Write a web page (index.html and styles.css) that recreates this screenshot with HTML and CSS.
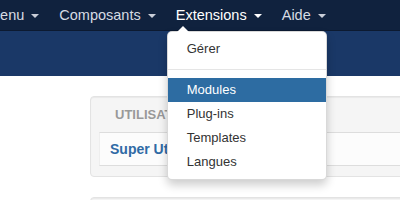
FILE: index.html
```html
<!DOCTYPE html>
<html lang="fr">
<head>
    <meta charset="UTF-8">
    <title>Administration</title>
    <link rel="stylesheet" href="styles.css">
</head>
<body>
<div class="navbar">
    <ul class="nav">
        <li class="nav-item"><a href="#">Menu <span class="caret"></span></a></li>
        <li class="nav-item"><a href="#">Composants <span class="caret"></span></a></li>
        <li class="nav-item open">
            <a href="#">Extensions <span class="caret"></span></a>
            <ul class="dropdown-menu">
                <li><a href="#">Gérer</a></li>
                <li class="divider"></li>
                <li class="active"><a href="#">Modules</a></li>
                <li><a href="#">Plug-ins</a></li>
                <li><a href="#">Templates</a></li>
                <li><a href="#">Langues</a></li>
            </ul>
        </li>
        <li class="nav-item"><a href="#">Aide <span class="caret"></span></a></li>
    </ul>
</div>
<div class="subhead"></div>

<div class="content">
    <div class="well">
        <div class="well-title">Utilisateurs connectés</div>
        <div class="row-striped">
            <a href="#" class="user-link">Super Utilisateur</a>
        </div>
    </div>
    <div class="well"></div>
</div>
</body>
</html>
```

FILE: styles.css
```css
body {
    margin: 0;
    font-family: "Liberation Sans", Arial, sans-serif;
    background-color: #fff;
    overflow: hidden;
}
ul {
    list-style: none;
    margin: 0;
    padding: 0;
}
a {
    text-decoration: none;
}
.navbar {
    background-color: #10223e;
    height: 30px;
    border-bottom: 1px solid #0c1a31;
}
.nav {
    display: flex;
    margin-left: -22px;
}
.nav-item {
    position: relative;
}
.nav-item > a {
    display: block;
    padding: 0 10px;
    line-height: 30px;
    font-size: 14.5px;
    color: #d6dbe3;
}
.nav-item.open > a {
    color: #fff;
}
.caret {
    display: inline-block;
    width: 0;
    height: 0;
    margin-left: 3px;
    vertical-align: middle;
    border-top: 4px solid #c9ced8;
    border-left: 4px solid transparent;
    border-right: 4px solid transparent;
}
.nav-item.open .caret {
    border-top-color: #fff;
}
.subhead {
    background-color: #1a3867;
    height: 45px;
}
.dropdown-menu {
    position: absolute;
    top: 31px;
    left: 1px;
    width: 160px;
    box-sizing: border-box;
    padding: 5px 0;
    background-color: #fff;
    border: 1px solid rgba(0, 0, 0, 0.15);
    border-radius: 5px;
    box-shadow: 0 5px 10px rgba(0, 0, 0, 0.2);
    z-index: 10;
}
.dropdown-menu::before {
    content: "";
    position: absolute;
    top: -6px;
    left: 9px;
    border-bottom: 6px solid #fff;
    border-left: 6px solid transparent;
    border-right: 6px solid transparent;
}
.dropdown-menu li a {
    display: block;
    padding: 3px 19px;
    line-height: 18px;
    font-size: 13px;
    color: #333;
}
.dropdown-menu .active a {
    background-color: #2d6ca2;
    color: #fff;
}
.dropdown-menu .divider {
    height: 1px;
    margin: 8px 0;
    background-color: #e5e5e5;
}
.content {
    padding: 20px 0 0 90px;
}
.well {
    width: 360px;
    padding: 8px 8px 10px;
    background-color: #f5f5f5;
    border: 1px solid #e3e3e3;
    border-radius: 4px;
    box-shadow: inset 0 1px 1px rgba(0, 0, 0, 0.05);
    margin-bottom: 20px;
}
.well-title {
    padding-left: 16px;
    margin-bottom: 7px;
    line-height: 20px;
    font-size: 13px;
    font-weight: bold;
    color: #999;
    text-transform: uppercase;
    white-space: nowrap;
}
.row-striped {
    padding: 7px 10px;
    line-height: 18px;
    background-color: #fcfcfc;
    border-top: 1px solid #ddd;
    border-bottom: 1px solid #ddd;
    border-left: 1px solid #eee;
}
.user-link {
    font-size: 14px;
    font-weight: bold;
    color: #2f6aa5;
}
```
